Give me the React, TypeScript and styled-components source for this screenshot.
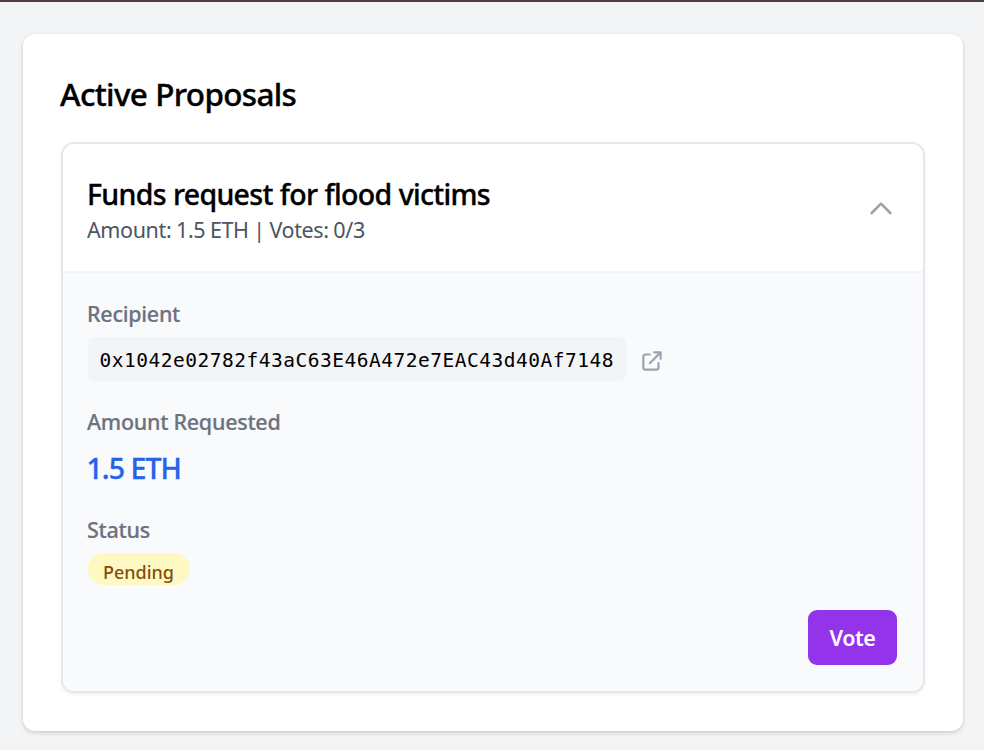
import React from 'react';
import styled, { createGlobalStyle } from 'styled-components';

const GlobalStyle = createGlobalStyle`
  *, *::before, *::after { box-sizing: border-box; }
  body { margin: 0; background: #f3f4f6; font-family: "Noto Sans", "Open Sans", sans-serif; color: #000; }
  h2, h3, p, dl, dt, dd { margin: 0; }
`;

const Page = styled.main`
  height: 750px;
  border-top: 2px solid #4f3d3c;
  padding: 32px 21px 0 22.5px;
  overflow: hidden;
`;

const Panel = styled.section`
  height: 697px;
  padding: 38px 38px 0;
  background: #fff;
  border-radius: 12px;
  box-shadow: 0 2px 5px rgba(0, 0, 0, 0.13), 0 1px 3px rgba(0, 0, 0, 0.06);
`;

const Title = styled.h2`
  height: 46px;
  margin-left: -0.5px;
  font-size: 31.5px;
  font-weight: 500;
  letter-spacing: -0.68px;
  word-spacing: 0.5px;
  line-height: 44px;
  white-space: nowrap;
  -webkit-text-stroke: 0.35px currentColor;
`;

const Card = styled.article`
  margin-top: 24px;
  height: 551px;
  border: 2px solid #e5e7eb;
  border-radius: 13px;
  overflow: hidden;
  box-shadow: 0 2px 3px rgba(0, 0, 0, 0.06);
`;

const CardHeader = styled.header`
  display: flex;
  align-items: center;
  justify-content: space-between;
  height: 127px;
  padding: 2px 25px 0 24.5px;
`;

const ProposalTitle = styled.h3`
  padding-top: 2px;
  font-size: 28.5px;
  font-weight: 500;
  letter-spacing: -0.7px;
  word-spacing: 0.5px;
  line-height: 40px;
  -webkit-text-stroke: 0.35px currentColor;
`;

const Summary = styled.p`
  color: #4b5563;
  font-size: 21.5px;
  letter-spacing: -0.38px;
  word-spacing: -0.5px;
  line-height: 32px;
`;

const Chevron = styled.svg`
  width: 32px;
  height: 32px;
  margin-right: 1px;
  color: #9ca3af;
`;

const Details = styled.div`
  display: flex;
  flex-direction: column;
  justify-content: space-between;
  height: 420px;
  border-top: 2px solid #f3f4f6;
  background: #f9fafb;
  padding: 24px 26px 26px 25px;
`;

const Fields = styled.dl`
  display: flex;
  flex-direction: column;
`;

const Field = styled.div`
  height: 108px;
`;

const Label = styled.dt`
  height: 36px;
  margin-left: -0.5px;
  color: #6b7280;
  font-size: 21.5px;
  font-weight: 500;
  letter-spacing: -0.27px;
  line-height: 34px;
  -webkit-text-stroke: 0.2px currentColor;
`;

const AddressRow = styled.dd`
  display: flex;
  align-items: center;
  gap: 13px;
  margin-top: 4px;
`;

const Address = styled.code`
  width: 538px;
  height: 44px;
  padding-left: 12px;
  border-radius: 6px;
  background: #f3f4f6;
  font-family: "DejaVu Sans Mono", monospace;
  font-size: 19.5px;
  letter-spacing: 0.51px;
  line-height: 48px;
  white-space: nowrap;
`;

const LinkIcon = styled.svg`
  width: 26px;
  height: 26px;
  margin-top: 4px;
  color: #9ca3af;
`;

const Amount = styled.dd`
  margin-left: -1px;
  padding-top: 5px;
  color: #2563eb;
  font-size: 28.5px;
  font-weight: 500;
  letter-spacing: -0.95px;
  line-height: 44px;
  -webkit-text-stroke: 0.35px currentColor;
`;

const Badge = styled.dd`
  width: 102px;
  height: 32px;
  && { margin-top: 4px; }
  border-radius: 16px;
  background: #fef9c3;
  color: #854d0e;
  font-size: 18px;
  font-weight: 500;
  line-height: 38px;
  text-align: center;
`;

const VoteButton = styled.button`
  align-self: flex-end;
  flex: none;
  width: 89px;
  height: 55px;
  padding: 0;
  border: 0;
  border-radius: 9px;
  background: #9333ea;
  color: #fff;
  font-family: inherit;
  font-size: 21.5px;
  font-weight: 600;
  letter-spacing: -0.4px;
  line-height: 55px;
`;

const stroke = {
  viewBox: '0 0 24 24',
  fill: 'none',
  stroke: 'currentColor',
  strokeWidth: 2,
  strokeLinecap: 'round',
  strokeLinejoin: 'round',
} as const;

export default function App() {
  return (
    <>
      <GlobalStyle />
      <Page>
        <Panel>
          <Title>Active Proposals</Title>
          <Card>
            <CardHeader>
              <div>
                <ProposalTitle>Funds request for flood victims</ProposalTitle>
                <Summary>Amount: 1.5 ETH | Votes: 0/3</Summary>
              </div>
              <Chevron {...stroke} aria-hidden="true">
                <path d="M5 15l7-7 7 7" />
              </Chevron>
            </CardHeader>
            <Details>
              <Fields>
                <Field>
                  <Label>Recipient</Label>
                  <AddressRow>
                    <Address>0x1042e02782f43aC63E46A472e7EAC43d40Af7148</Address>
                    <LinkIcon {...stroke} aria-hidden="true">
                      <path d="M10 6H6a2 2 0 00-2 2v10a2 2 0 002 2h10a2 2 0 002-2v-4M14 4h6m0 0v6m0-6L10 14" />
                    </LinkIcon>
                  </AddressRow>
                </Field>
                <Field>
                  <Label>Amount Requested</Label>
                  <Amount>1.5 ETH</Amount>
                </Field>
                <div>
                  <Label>Status</Label>
                  <Badge>Pending</Badge>
                </div>
              </Fields>
              <VoteButton type="button">Vote</VoteButton>
            </Details>
          </Card>
        </Panel>
      </Page>
    </>
  );
}
